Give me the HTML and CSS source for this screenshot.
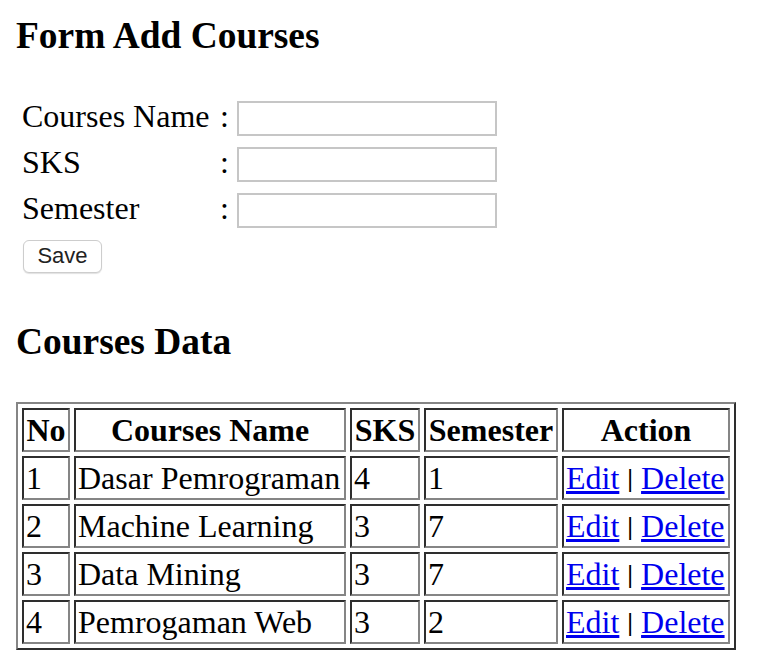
FILE: index.html
```html
<!DOCTYPE html>
<html lang="en">
<head>
<meta charset="utf-8">
<title>Courses</title>
<link rel="stylesheet" href="styles.css">
</head>
<body>
<h3 class="title">Form Add Courses</h3>
<form class="course-form">
  <label class="form-label" for="name">Courses Name</label><span class="form-colon">:</span><input class="form-input" id="name" type="text">
  <label class="form-label" for="sks">SKS</label><span class="form-colon">:</span><input class="form-input" id="sks" type="text">
  <label class="form-label" for="semester">Semester</label><span class="form-colon">:</span><input class="form-input" id="semester" type="text">
</form>
<button class="save-btn" type="button">Save</button>
<h3 class="title title-data">Courses Data</h3>
<table class="data-table">
  <thead>
    <tr><th class="col-no">No</th><th class="col-name">Courses Name</th><th class="col-sks">SKS</th><th class="col-sem">Semester</th><th class="col-action">Action</th></tr>
  </thead>
  <tbody>
    <tr><td>1</td><td>Dasar Pemrograman</td><td>4</td><td>1</td><td><a href="#">Edit</a> <span class="sep">|</span> <a href="#">Delete</a></td></tr>
    <tr><td>2</td><td>Machine Learning</td><td>3</td><td>7</td><td><a href="#">Edit</a> <span class="sep">|</span> <a href="#">Delete</a></td></tr>
    <tr><td>3</td><td>Data Mining</td><td>3</td><td>7</td><td><a href="#">Edit</a> <span class="sep">|</span> <a href="#">Delete</a></td></tr>
    <tr><td>4</td><td>Pemrogaman Web</td><td>3</td><td>2</td><td><a href="#">Edit</a> <span class="sep">|</span> <a href="#">Delete</a></td></tr>
  </tbody>
</table>
</body>
</html>
```
FILE: styles.css
```css
html, body {
  background: #ffffff;
}
body {
  margin: 0;
  padding: 0 16px;
  font-family: "Liberation Serif", "Times New Roman", serif;
  font-size: 32px;
  color: #000000;
}
.title {
  margin: 14px 0 0;
  font-size: 37.44px;
  line-height: 43px;
  font-weight: bold;
}
.course-form {
  margin: 39px 0 0;
  padding-left: 6px;
  display: grid;
  grid-template-columns: 196px 19px 260px;
  grid-auto-rows: 42px;
  row-gap: 4px;
  align-items: start;
}
.form-label,
.form-colon {
  padding-top: 2px;
  line-height: 37px;
  white-space: nowrap;
}
.form-colon {
  padding-left: 2px;
}
.form-input {
  margin: 5px 0 0;
  box-sizing: border-box;
  width: 260px;
  height: 35px;
  border: 2px solid #c6c6c6;
  border-radius: 0;
  padding: 0 4px;
  background: #ffffff;
  font-family: "Liberation Sans", Arial, sans-serif;
  font-size: 22px;
}
.save-btn {
  display: block;
  margin: 10px 0 0 7px;
  box-sizing: border-box;
  width: 79px;
  height: 33px;
  padding: 0 0 1px;
  border: 1px solid #cdcdcd;
  border-radius: 6px;
  background: #ffffff;
  box-shadow: 0 1px 1px rgba(0, 0, 0, 0.12);
  font-family: "Liberation Sans", Arial, sans-serif;
  font-size: 22px;
  color: #222222;
}
.title-data {
  margin-top: 47px;
}
.data-table {
  margin-top: 39px;
  border-collapse: separate;
  border-spacing: 4px;
  border: 2px solid;
  border-color: #858585 #2e2e2e #2e2e2e #858585;
}
.data-table th,
.data-table td {
  box-sizing: content-box;
  height: 36px;
  padding: 2px;
  border: 2px solid;
  border-color: #2e2e2e #858585 #858585 #2e2e2e;
  line-height: 35px;
  white-space: nowrap;
  vertical-align: middle;
}
.data-table th {
  text-align: center;
  font-weight: bold;
}
.data-table td {
  text-align: left;
}
.col-no { width: 40px; }
.col-name { width: 264px; }
.col-sks { width: 62px; }
.col-sem { width: 126px; }
.col-action { width: 160px; }
.data-table a {
  color: #0000ee;
  text-decoration: underline;
}
.sep {
  font-size: 26px;
  line-height: 0;
  font-weight: bold;
  vertical-align: 2px;
}
```
